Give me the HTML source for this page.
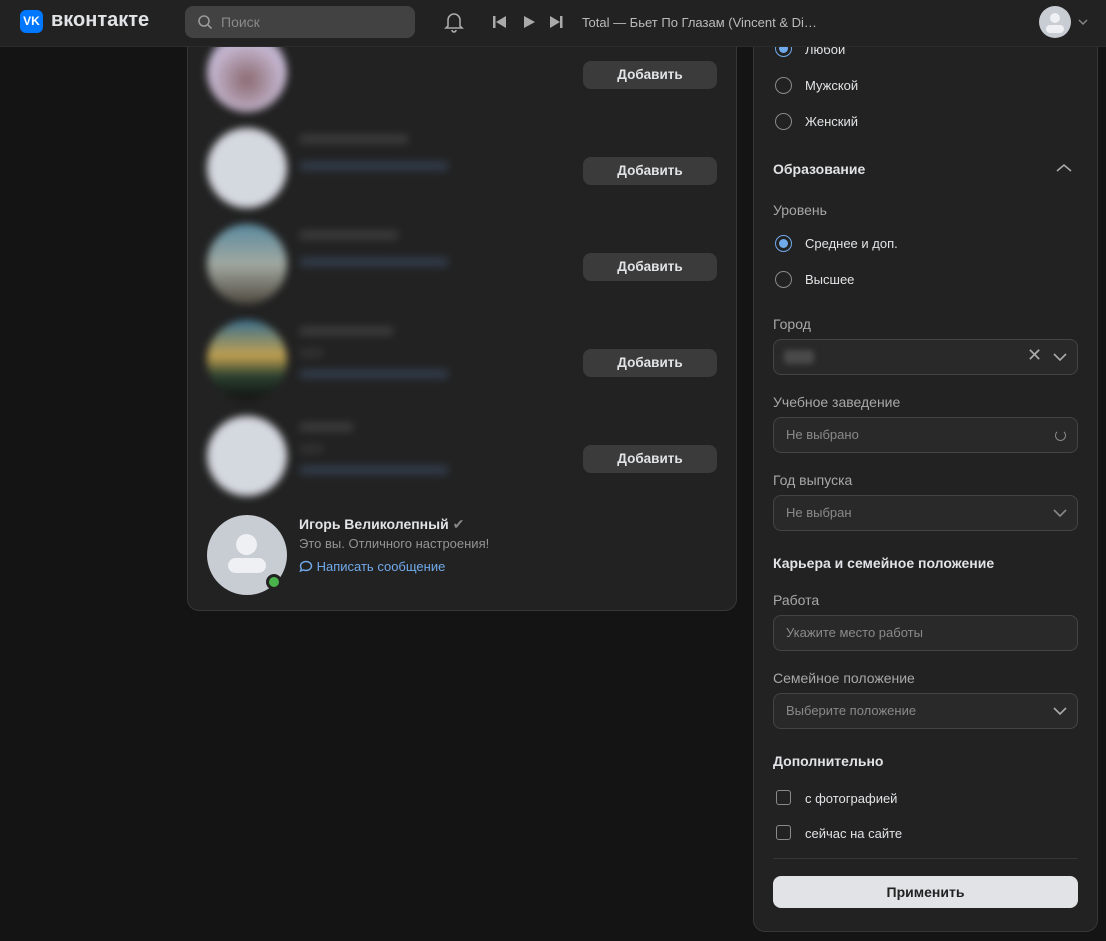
<!DOCTYPE html>
<html><head><meta charset="utf-8"><style>
*{box-sizing:border-box;margin:0;padding:0}
body{width:1106px;height:941px;overflow:hidden;background:#141414;font-family:"Liberation Sans","Noto Sans CJK SC",sans-serif;color:#e1e3e6;position:relative}
.hdr{position:absolute;left:0;top:0;width:1106px;height:47px;background:#222222;border-bottom:1px solid #2c2c2c;z-index:10}
.card{position:absolute;background:#222222;border:1px solid #363738;border-radius:12px}
.btn{position:absolute;left:583px;width:134px;height:28px;background:#3b3b3b;border-radius:8px;color:#e1e3e6;font-size:13.5px;font-weight:bold;text-align:center;line-height:28px}
.av{position:absolute;left:207px;width:80px;height:80px;border-radius:50%;filter:blur(4px)}
.bl{position:absolute;left:299px;height:10px;border-radius:5px;filter:blur(4px);opacity:.6}
.t{position:absolute;font-size:13px;color:#e1e3e6}
.h{position:absolute;font-size:14px;font-weight:bold;color:#e1e3e6;left:773px}
.lbl{position:absolute;font-size:14px;color:#a8a8a8;left:773px}
.radio{position:absolute;left:775px;width:17px;height:17px;border:1.5px solid #8a8a8a;border-radius:50%}
.radio.on{border:1.5px solid #71aaeb}
.radio.on::after{content:"";position:absolute;left:2.5px;top:2.5px;width:9px;height:9px;border-radius:50%;background:#71aaeb}
.inp{position:absolute;left:773px;width:305px;height:36px;border:1px solid #444;border-radius:8px;background:#292929;font-size:13px;color:#8a8a8a;padding-left:12px;line-height:34px}
.chk{position:absolute;left:776px;width:15px;height:15px;border:1.5px solid #8a8a8a;border-radius:3px}
</style></head><body>
<div class="hdr">
 <div style="position:absolute;left:20px;top:10px;width:23px;height:23px;background:#0077ff;border-radius:6px;color:#fff;font-weight:bold;font-size:12px;text-align:center;line-height:23px">VK</div>
 <div style="position:absolute;left:51px;top:9px;font-size:20px;font-weight:bold;color:#e1e3e6">вконтакте</div>
 <div style="position:absolute;left:185px;top:6px;width:230px;height:32px;background:#424242;border-radius:8px">
  <svg style="position:absolute;left:12px;top:8px" width="16" height="16" viewBox="0 0 16 16"><circle cx="7" cy="7" r="5" stroke="#999" stroke-width="1.6" fill="none"/><path d="M11 11l3.5 3.5" stroke="#999" stroke-width="1.6"/></svg>
  <span style="position:absolute;left:36px;top:8px;font-size:14px;color:#8a8a8a">Поиск</span></div>
 <svg style="position:absolute;left:444px;top:11px" width="20" height="22" viewBox="0 0 20 22"><path d="M4 15V9a6 6 0 0112 0v6l2 2H2z M8 19a2 2 0 004 0" stroke="#aaa" stroke-width="1.6" fill="none"/></svg>
 <svg style="position:absolute;left:493px;top:15px" width="72" height="14" viewBox="0 0 72 14"><rect x="0" y="1" width="2.5" height="12" fill="#aaa"/><path d="M13 1L3 7l10 6z" fill="#aaa"/><path d="M31 1l11 6-11 6z" fill="#aaa"/><path d="M57 1l10 6-10 6z" fill="#aaa"/><rect x="67" y="1" width="2.5" height="12" fill="#aaa"/></svg>
 <div style="position:absolute;left:582px;top:15px;font-size:13px;color:#bbb">Total — Бьет По Глазам (Vincent &amp; Di…</div>
 <div style="position:absolute;left:1039px;top:6px;width:32px;height:32px;border-radius:50%;background:#c8ccd3;overflow:hidden"><div style="position:absolute;left:11px;top:7px;width:10px;height:10px;border-radius:50%;background:#eef0f3"></div><div style="position:absolute;left:7px;top:19px;width:18px;height:8px;border-radius:5px;background:#eef0f3"></div></div>
 <svg style="position:absolute;left:1078px;top:18px" width="10" height="8"><path d="M1 2l4 4 4-4" stroke="#888" fill="none" stroke-width="1.4"/></svg>
</div>
<div class="card" style="left:187px;top:-20px;width:550px;height:631px"></div>
<div class="card" style="left:753px;top:-20px;width:345px;height:952px"></div>
<div class="av" style="top:32px;background:radial-gradient(circle at 50% 60%,#8a6a70,#c6b8d2 60%,#6a6a8a)"></div>
<div class="btn" style="top:61px">Добавить</div>
<div class="av" style="top:128px;background:#d4d8df"></div>
<div class="bl" style="top:134px;width:110px;background:#4a4a4a"></div><div class="bl" style="top:161px;width:150px;background:#3a4a60"></div>
<div class="btn" style="top:157px">Добавить</div>
<div class="av" style="top:224px;background:linear-gradient(#5a8aa0,#a0a8a0 50%,#504a40)"></div>
<div class="bl" style="top:230px;width:100px;background:#4a4a4a"></div><div class="bl" style="top:257px;width:150px;background:#3a4a60"></div>
<div class="btn" style="top:253px">Добавить</div>
<div class="av" style="top:320px;background:linear-gradient(#3a7090,#c0a050 45%,#2a4030 70%,#111)"></div>
<div class="bl" style="top:326px;width:95px;background:#4a4a4a"></div><div class="bl" style="top:348px;width:25px;background:#3a3a3a"></div><div class="bl" style="top:369px;width:150px;background:#3a4a60"></div>
<div class="btn" style="top:349px">Добавить</div>
<div class="av" style="top:416px;background:#d4d8df"></div>
<div class="bl" style="top:422px;width:55px;background:#4a4a4a"></div><div class="bl" style="top:444px;width:25px;background:#3a3a3a"></div><div class="bl" style="top:465px;width:150px;background:#3a4a60"></div>
<div class="btn" style="top:445px">Добавить</div>
<div style="position:absolute;left:207px;top:515px;width:80px;height:80px;border-radius:50%;background:#c8ccd3"><div style="position:absolute;left:29px;top:19px;width:21px;height:21px;border-radius:50%;background:#eef0f3"></div><div style="position:absolute;left:21px;top:43px;width:38px;height:15px;border-radius:8px;background:#eef0f3"></div></div>
<div style="position:absolute;left:266px;top:574px;width:16px;height:16px;border-radius:50%;background:#4bb34b;border:3px solid #222"></div>
<div style="position:absolute;left:299px;top:516px;font-size:14px;font-weight:bold">Игорь Великолепный <span style="color:#888;font-weight:normal">✔</span></div>
<div class="t" style="left:299px;top:536px;color:#939393">Это вы. Отличного настроения!</div>
<div class="t" style="left:299px;top:559px;color:#71aaeb"><svg width="14" height="13" viewBox="0 0 14 13" style="vertical-align:-2px"><path d="M7 1.5c3 0 5.5 2 5.5 4.5S10 10.5 7 10.5c-1 0-2-.2-2.7-.6L1.5 11l.8-2.4C1.8 7.8 1.5 6.9 1.5 6 1.5 3.5 4 1.5 7 1.5z" stroke="#71aaeb" stroke-width="1.4" fill="none"/></svg> Написать сообщение</div>

<div class="radio on" style="top:40px"></div><div class="t" style="left:805px;top:42px">Любой</div>
<div class="radio" style="top:77px"></div><div class="t" style="left:805px;top:78px">Мужской</div>
<div class="radio" style="top:113px"></div><div class="t" style="left:805px;top:114px">Женский</div>
<div class="h" style="top:161px">Образование</div>
<svg style="position:absolute;left:1056px;top:163px" width="16" height="10"><path d="M1 8l7-6 7 6" stroke="#aaa" stroke-width="1.6" fill="none"/></svg>
<div class="lbl" style="top:202px">Уровень</div>
<div class="radio on" style="top:235px"></div><div class="t" style="left:805px;top:236px">Среднее и доп.</div>
<div class="radio" style="top:271px"></div><div class="t" style="left:805px;top:272px">Высшее</div>
<div class="lbl" style="top:316px">Город</div>
<div class="inp" style="top:339px"><div style="position:absolute;left:10px;top:10px;width:30px;height:14px;background:#4a4a4a;border-radius:4px;filter:blur(3px)"></div></div>
<div style="position:absolute;left:1027px;top:345px;color:#aaa;font-size:18px">✕</div>
<svg style="position:absolute;left:1053px;top:353px" width="14" height="8"><path d="M1 1l6 6 6-6" stroke="#aaa" stroke-width="1.6" fill="none"/></svg>
<div class="lbl" style="top:394px">Учебное заведение</div>
<div class="inp" style="top:417px">Не выбрано</div>
<div style="position:absolute;left:1055px;top:430px;width:11px;height:11px;border:1.5px solid #888;border-top-color:transparent;border-radius:50%"></div>
<div class="lbl" style="top:472px">Год выпуска</div>
<div class="inp" style="top:495px">Не выбран</div>
<svg style="position:absolute;left:1053px;top:509px" width="14" height="8"><path d="M1 1l6 6 6-6" stroke="#888" stroke-width="1.6" fill="none"/></svg>
<div class="h" style="top:555px">Карьера и семейное положение</div>
<div class="lbl" style="top:592px">Работа</div>
<div class="inp" style="top:615px">Укажите место работы</div>
<div class="lbl" style="top:670px">Семейное положение</div>
<div class="inp" style="top:693px">Выберите положение</div>
<svg style="position:absolute;left:1053px;top:707px" width="14" height="8"><path d="M1 1l6 6 6-6" stroke="#aaa" stroke-width="1.6" fill="none"/></svg>
<div class="h" style="top:753px">Дополнительно</div>
<div class="chk" style="top:790px"></div><div class="t" style="left:805px;top:791px">с фотографией</div>
<div class="chk" style="top:825px"></div><div class="t" style="left:805px;top:826px">сейчас на сайте</div>
<div style="position:absolute;left:773px;top:858px;width:305px;height:1px;background:#363738"></div>
<div style="position:absolute;left:773px;top:876px;width:305px;height:32px;background:#e1e3e6;border-radius:8px;color:#222;font-size:14px;font-weight:bold;text-align:center;line-height:32px">Применить</div>
</body></html>
